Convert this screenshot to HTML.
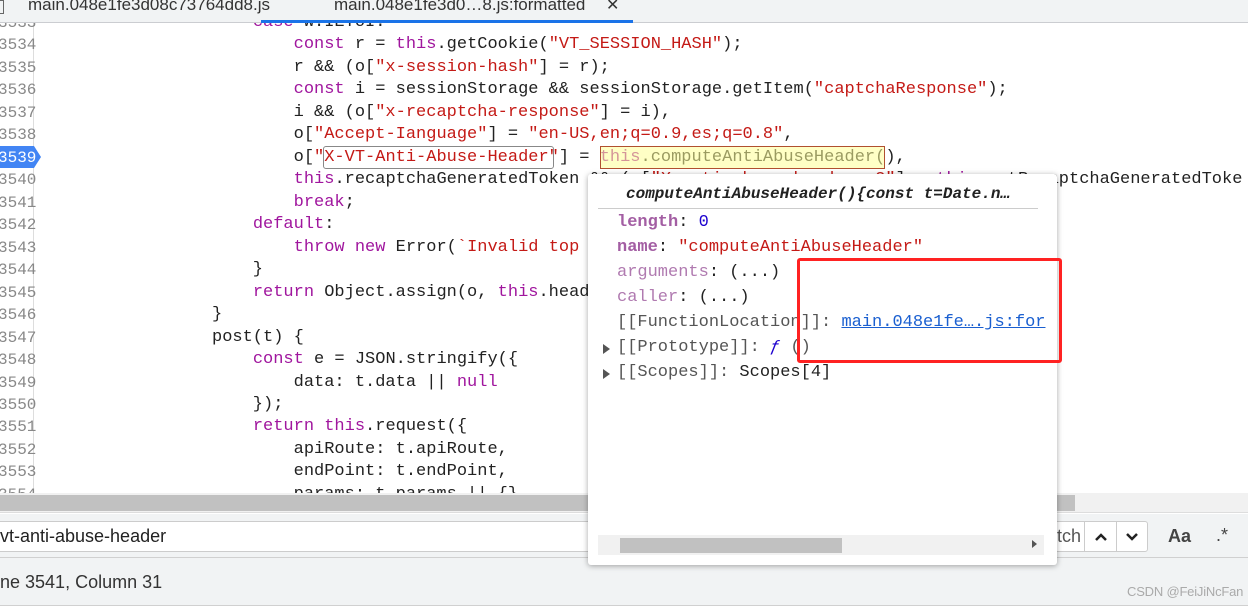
<!DOCTYPE html>
<html><head><meta charset="utf-8"><style>
*{margin:0;padding:0;box-sizing:border-box}
body{width:1248px;height:608px;overflow:hidden;background:#fff;font-family:"Liberation Sans",sans-serif;position:relative}
.tabs{position:absolute;left:0;top:0;width:1248px;height:23px;background:#f1f3f4;border-bottom:1px solid #cbcdd1}
.tab{position:absolute;top:-5px;font-size:17px;color:#333;white-space:nowrap}
.code{position:absolute;left:0;top:23px;width:1248px;height:470px;overflow:hidden}
.gut{position:absolute;left:0;top:0;width:34px;height:470px;border-right:1px solid #ddd}
.ln,.cl{position:absolute;font-family:"Liberation Mono",monospace;font-size:17px;line-height:22.47px;white-space:pre;color:#222}
.ln{left:-2px;color:#888;font-size:16px}
.k{color:#a0169e}.s{color:#c41a16}.n{color:#1c00cf}
.hs{position:absolute;left:0;top:493px;width:1248px;height:20px;background:#f1f1f1;border-bottom:1px solid #ddd}
.search{position:absolute;left:0;top:514px;width:1248px;height:44px;background:#f1f3f4;border-bottom:1px solid #d0d0d0}
.status{position:absolute;left:0;top:558px;width:1248px;height:48px;background:#f1f3f4;border-bottom:1px solid #d0d0d0}
.pop{position:absolute;left:588px;top:174px;width:469px;height:391px;background:#fff;border-radius:3px;box-shadow:0 1px 6px rgba(0,0,0,.35)}
.pr{position:absolute;left:29px;font-family:"Liberation Mono",monospace;font-size:17px;white-space:pre;color:#222}
.pk{color:#a35ea3;font-weight:bold}.pd{color:#b07ab0}
</style></head><body>
<div class="tabs">
<div style="position:absolute;left:0;top:0;width:4px;height:14px;border:1px solid #666;border-left:none"></div>
<div class="tab" style="left:28px">main.048e1fe3d08c73764dd8.js</div>
<div class="tab" style="left:334px">main.048e1fe3d0…8.js:formatted</div>
<div class="tab" style="left:606px;font-size:16px">✕</div>
<div style="position:absolute;left:261px;top:20px;width:372px;height:3px;background:#1a73e8"></div>
</div>
<div class="code">
<div class="gut"></div>
<div style="position:absolute;left:0;top:123px;width:34px;height:22px;background:#4285f4"></div>
<div style="position:absolute;left:34px;top:123px;width:0;height:0;border-top:11px solid transparent;border-bottom:11px solid transparent;border-left:7px solid #4285f4"></div>
<div class="ln" style="top:-11px">3533
3534
3535
3536
3537
3538
<span style="color:#fff">3539</span>
3540
3541
3542
3543
3544
3545
3546
3547
3548
3549
3550
3551
3552
3553
3554</div>
<div class="cl" style="left:212px;top:-11px">    <span class="k">case</span> w.IEToI:
        <span class="k">const</span> r = <span class="k">this</span>.getCookie(<span class="s">"VT_SESSION_HASH"</span>);
        r &amp;&amp; (o[<span class="s">"x-session-hash"</span>] = r);
        <span class="k">const</span> i = sessionStorage &amp;&amp; sessionStorage.getItem(<span class="s">"captchaResponse"</span>);
        i &amp;&amp; (o[<span class="s">"x-recaptcha-response"</span>] = i),
        o[<span class="s">"Accept-Ianguage"</span>] = <span class="s">"en-US,en;q=0.9,es;q=0.8"</span>,
        o[<span class="s">"X-VT-Anti-Abuse-Header"</span>] = <span class="k">this</span>.computeAntiAbuseHeader(),
        <span class="k">this</span>.recaptchaGeneratedToken &amp;&amp; (o[<span class="s">"X-anti-abuse-header-v2"</span>] = <span class="k">this</span>.getRecaptchaGeneratedToke
        <span class="k">break</span>;
    <span class="k">default</span>:
        <span class="k">throw</span> <span class="k">new</span> Error(<span class="s">`Invalid top</span>
    }
    <span class="k">return</span> Object.assign(o, <span class="k">this</span>.headers)
}
post(t) {
    <span class="k">const</span> e = JSON.stringify({
        data: t.data || <span class="k">null</span>
    });
    <span class="k">return</span> <span class="k">this</span>.request({
        apiRoute: t.apiRoute,
        endPoint: t.endPoint,
        params: t.params || {}</div>
<div style="position:absolute;left:323px;top:123px;width:231px;height:23px;border:1px solid #888;border-radius:3px"></div>
<div style="position:absolute;left:600px;top:123px;width:285px;height:23px;border:1px solid #b05030;background:rgba(255,255,150,.55)"></div>
</div>
<div class="hs"><div style="position:absolute;left:0;top:2px;width:1075px;height:16px;background:#c1c1c1"></div></div>
<div class="search">
<div style="position:absolute;left:-5px;top:7px;width:1060px;height:31px;background:#fff;border:1px solid #ccc"></div>
<div style="position:absolute;left:0;top:12px;font-size:18px;color:#222">vt-anti-abuse-header</div>
<div style="position:absolute;left:1020px;top:7px;width:128px;height:31px;background:#fff;border:1px solid #ccc;border-radius:3px"></div>
<div style="position:absolute;left:1057px;top:12px;font-size:18px;color:#555">tch</div>
<div style="position:absolute;left:1084px;top:7px;width:1px;height:31px;background:#ccc"></div>
<div style="position:absolute;left:1116px;top:7px;width:1px;height:31px;background:#ccc"></div>
<svg style="position:absolute;left:1094px;top:18px" width="14" height="10"><path d="M2 8 L7 3 L12 8" stroke="#222" stroke-width="2.5" fill="none"/></svg>
<svg style="position:absolute;left:1125px;top:18px" width="14" height="10"><path d="M2 2 L7 7 L12 2" stroke="#222" stroke-width="2.5" fill="none"/></svg>
<div style="position:absolute;left:1168px;top:12px;font-size:18px;font-weight:bold;color:#444">Aa</div>
<div style="position:absolute;left:1216px;top:11px;font-size:18px;color:#444">.*</div>
</div>
<div class="status">
<div style="position:absolute;left:0;top:14px;font-size:18px;color:#333">ne 3541, Column 31</div>
<div style="position:absolute;left:1127px;top:26px;font-size:13px;color:#aaa;white-space:nowrap;letter-spacing:-0.2px">CSDN @FeiJiNcFan</div>
</div>
<div class="pop">
<div class="pr" style="left:38px;top:11px;font-style:italic;font-weight:bold;font-size:16px">computeAntiAbuseHeader(){const t=Date.n…</div>
<div style="position:absolute;left:10px;top:34px;width:440px;height:1px;background:#ccc"></div>
<div class="pr" style="top:39px"><span class="pk">length</span>: <span class="n">0</span></div>
<div class="pr" style="top:64px"><span class="pk">name</span>: <span class="s">"computeAntiAbuseHeader"</span></div>
<div class="pr" style="top:89px"><span class="pd">arguments</span>: (...)</div>
<div class="pr" style="top:114px"><span class="pd">caller</span>: (...)</div>
<div class="pr" style="top:139px;color:#555">[[FunctionLocation]]: <span style="color:#1a5fd0;text-decoration:underline">main.048e1fe….js:for</span></div>
<div class="pr" style="top:164px;color:#555">[[Prototype]]: <i style="color:#1c00cf">ƒ</i> ()</div>
<div class="pr" style="top:189px;color:#555">[[Scopes]]: <span style="color:#222">Scopes[4]</span></div>
<div style="position:absolute;left:15px;top:170px;border-top:5px solid transparent;border-bottom:5px solid transparent;border-left:7px solid #555"></div>
<div style="position:absolute;left:15px;top:195px;border-top:5px solid transparent;border-bottom:5px solid transparent;border-left:7px solid #555"></div>
<div style="position:absolute;left:10px;top:361px;width:446px;height:20px;background:#f1f1f1"></div>
<div style="position:absolute;left:32px;top:364px;width:222px;height:15px;background:#c1c1c1"></div>
<div style="position:absolute;left:444px;top:366px;border-top:4px solid transparent;border-bottom:4px solid transparent;border-left:5px solid #555"></div>
</div>
<div style="position:absolute;left:797px;top:258px;width:265px;height:105px;border:3px solid #f22;border-radius:3px"></div>
</body></html>
